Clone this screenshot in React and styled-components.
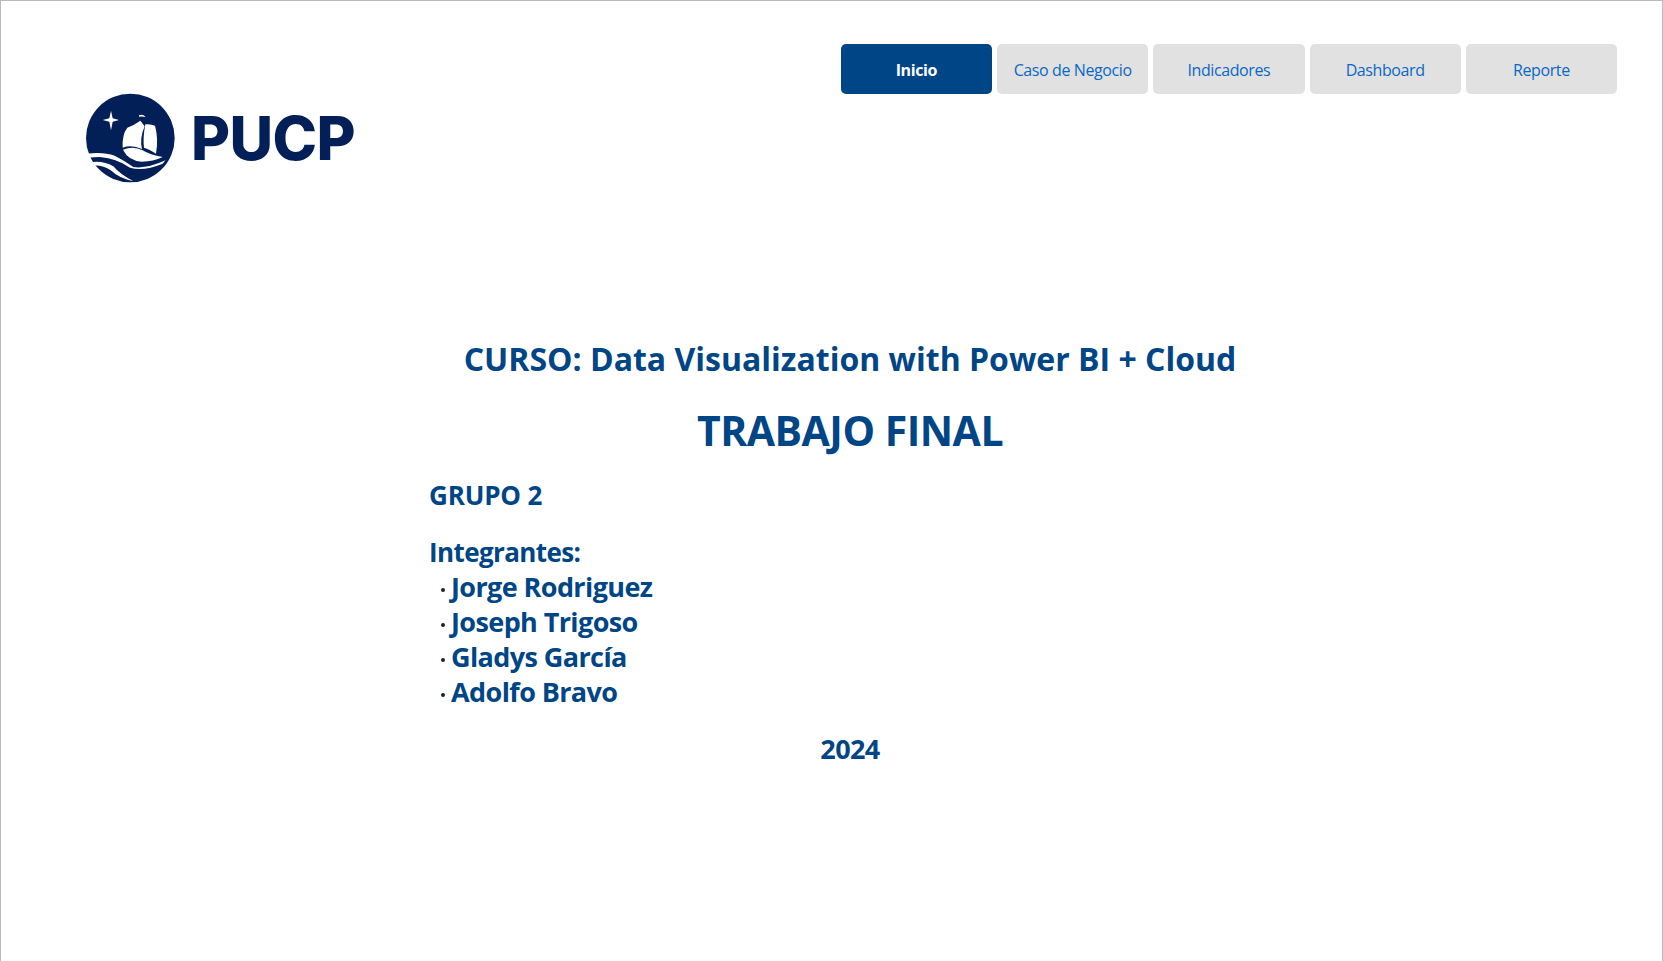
import React from "react";
import styled, { createGlobalStyle } from "styled-components";

const Global = createGlobalStyle`
  html, body { margin: 0; padding: 0; background: #fff; }
  #root { height: 961px; }
`;
const Frame = styled.div`
  box-sizing: border-box; width: 1663px; height: 961px; overflow: hidden;
  border-top: 1px solid #b9b9b9; border-left: 1px solid #b9b9b9; border-right: 1px solid #b9b9b9;
  background: #fff; font-family: "Open Sans", "Noto Sans", sans-serif; color: #004586;
  display: flex; flex-direction: column;
`;
const Nav = styled.nav`
  display: flex; justify-content: flex-end; gap: 5px; padding: 43px 45px 0 0;
`;
const NavButton = styled.div`
  box-sizing: border-box; width: 151.25px; height: 50px; border-radius: 5px; padding-top: 2px;
  display: flex; align-items: center; justify-content: center;
  font-size: 16px; letter-spacing: -0.4px;
  font-weight: ${p => (p.$active ? 700 : 400)};
  color: ${p => (p.$active ? "#fff" : "#0a68c4")};
  background: ${p => (p.$active ? "#004586" : "#e1e1e1")};
`;
const Brand = styled.div`
  display: flex; align-items: center; gap: 15px; padding-left: 85px; height: 88px;
`;
const BrandName = styled.span`
  font-family: Inter, sans-serif; font-weight: 800; font-size: 60px; letter-spacing: -0.6px;
  line-height: 1; color: #031f57;
`;
const Main = styled.main`
  box-sizing: border-box; width: 842px; margin: 156px 0 0 428px;
  display: flex; flex-direction: column;
`;
const Course = styled.h2`
  margin: 0; text-align: center; font-size: 32px; font-weight: 700; line-height: 42px; letter-spacing: 0;
`;
const Title = styled.h1`
  margin: 26px 0 0; text-align: center; font-size: 41px; font-weight: 700; line-height: 48px; letter-spacing: -0.5px;
`;
const Group = styled.h3`
  margin: 23px 0 0; font-size: 26px; font-weight: 700; line-height: 36px; letter-spacing: -0.15px;
`;
const Label = styled.p`
  margin: 22px 0 0; font-size: 26px; font-weight: 700; line-height: 35px; letter-spacing: -0.6px;
`;
const Members = styled.ul`
  margin: -1px 0 0; padding: 0 0 0 12px; list-style: none;
`;
const Member = styled.li`
  display: flex; align-items: center; gap: 6px; font-size: 27px; font-weight: 700; line-height: 35px; letter-spacing: -0.6px;
  &::before { content: ""; width: 4px; height: 4px; border-radius: 50%; background: #16233a; margin-top: 7px; }
`;
const Year = styled.p`
  margin: 22px 0 0; text-align: center; font-size: 27px; font-weight: 700; line-height: 35px; letter-spacing: -0.6px;
`;

const Logo = () => (
  <svg width="90" height="90" viewBox="-42 -36 270 270" aria-hidden="true">
    <circle cx="91" cy="99" r="133" fill="#031f57" />
    <path d="M33 17 L38 40 L57 45 L38 50 L33 76 L28 50 L8 45 L28 40 Z" fill="#fff" />
    <path d="M117 31 Q128 26 137 36 Q127 33 117 35 Z" fill="#fff" />
    <path d="M121 47 Q100 62 82 68 Q66 88 68 128 Q95 118 126 132 Q118 100 134 64 Q128 56 121 47 Z" fill="#fff" />
    <path d="M136 58 Q152 56 165 62 Q176 100 168 146 Q148 132 132 128 Q128 100 136 58 Z" fill="#fff" />
    <path d="M69 134 Q100 122 128 136 Q150 150 188 156 Q160 170 125 170 Q84 166 69 134 Z" fill="#fff" />
    <path d="M-40 146 Q10 140 44 152 Q72 166 100 186 Q140 192 196 166 L188 176 Q130 200 90 188 Q50 160 0 156 Q-20 156 -36 158 Z" fill="#fff" />
    <path d="M-30 172 Q10 166 40 184 Q62 210 100 228 Q60 222 32 196 Q10 180 -22 182 Z" fill="#fff" />
  </svg>
);

export default function App() {
  const tabs = ["Inicio", "Caso de Negocio", "Indicadores", "Dashboard", "Reporte"];
  const members = ["Jorge Rodriguez", "Joseph Trigoso", "Gladys García", "Adolfo Bravo"];
  return (
    <Frame>
      <Global />
      <Nav>
        {tabs.map((t, i) => <NavButton key={t} $active={i === 0}>{t}</NavButton>)}
      </Nav>
      <Brand>
        <Logo />
        <BrandName>PUCP</BrandName>
      </Brand>
      <Main>
        <Course>CURSO: Data Visualization with Power BI + Cloud</Course>
        <Title>TRABAJO FINAL</Title>
        <Group>GRUPO 2</Group>
        <Label>Integrantes:</Label>
        <Members>
          {members.map(m => <Member key={m}>{m}</Member>)}
        </Members>
        <Year>2024</Year>
      </Main>
    </Frame>
  );
}
